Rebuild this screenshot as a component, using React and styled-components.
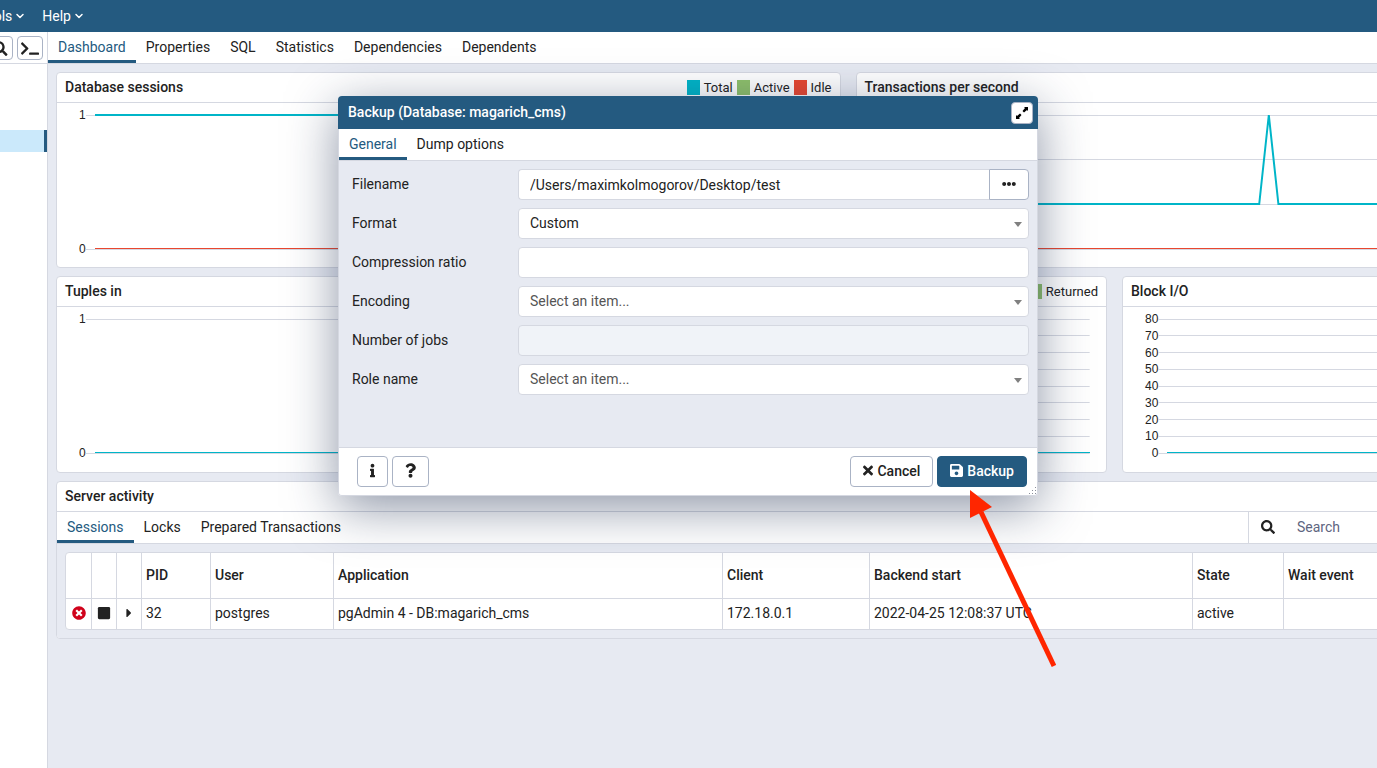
import React, { useState } from 'react';
import styled, { createGlobalStyle } from 'styled-components';
import {
    FaCaretRight,
    FaEllipsisH,
    FaInfo,
    FaQuestion,
    FaSave,
    FaSearch,
    FaSquare,
    FaTerminal,
    FaTimes,
    FaTimesCircle,
} from 'react-icons/fa';
import { LuChevronDown } from 'react-icons/lu';

const mainTabs = ['Dashboard', 'Properties', 'SQL', 'Statistics', 'Dependencies', 'Dependents'];
const activityTabs = ['Sessions', 'Locks', 'Prepared Transactions'];

const TEAL = '#00b5c8';
const GREEN = '#8fc16b';
const RED = '#e9472f';

const FLAT_TOP = '0,7 1000,7';
const FLAT_ZERO = '0,141 1000,141';
const SPIKE = '0,96 495,96 508,7 521,96 1000,96';

function TabBar({ tabs, label, children }) {
    const [active, setActive] = useState(tabs[0]);

    return (
        <TabStrip>
            <TabList role="tablist" aria-label={label}>
                {tabs.map(tab => (
                    <Tab key={tab} type="button" role="tab" aria-selected={tab === active} $active={tab === active} onClick={() => setActive(tab)}>
                        {tab}
                    </Tab>
                ))}
            </TabList>
            {children}
        </TabStrip>
    );
}

function Chart({ title, legend = [], ticks, lines, tall }) {
    const step = 134 / (ticks.length - 1);

    return (
        <Panel>
            <PanelHeader>
                <PanelTitle>{title}</PanelTitle>
                <Legend>
                    {legend.map(item => (
                        <LegendItem key={item.name}>
                            <Swatch $color={item.color}/>
                            {item.name}
                        </LegendItem>
                    ))}
                </Legend>
            </PanelHeader>
            <ChartBody $tall={tall}>
                <Axis>
                    {ticks.map(tick => <span key={tick}>{tick}</span>)}
                </Axis>
                <Plot aria-hidden="true">
                    {ticks.map((tick, i) => {
                        const y = 7 + Math.floor(i * step) + 0.5;
                        return <line key={tick} x1="0" x2="100%" y1={y} y2={y} stroke="#d5d8e1"/>;
                    })}
                    <svg x="9" y="0" width="100%" height="141" viewBox="0 0 1000 141" preserveAspectRatio="none">
                        {lines.map(line => (
                            <polyline key={line.points} points={line.points} fill="none" stroke={line.color} strokeWidth="2" vectorEffect="non-scaling-stroke"/>
                        ))}
                    </svg>
                </Plot>
            </ChartBody>
        </Panel>
    );
}

function SelectField({ id, options }) {
    return (
        <SelectWrap>
            <Select id={id} $placeholder={options[0].startsWith('Select')}>
                {options.map(option => <option key={option}>{option}</option>)}
            </Select>
            <SelectArrow viewBox="0 0 8 5" aria-hidden="true">
                <path d="M0 0h8L4 5z"/>
            </SelectArrow>
        </SelectWrap>
    );
}

function BackupDialog() {
    return (
        <Dialog role="dialog" aria-labelledby="backup-title">
            <DialogHeader>
                <DialogTitle id="backup-title">Backup (Database: magarich_cms)</DialogTitle>
                <ExpandButton type="button" aria-label="Maximize">
                    <svg viewBox="0 0 14 14" width="14" height="14" aria-hidden="true">
                        <path d="M9 1h4v4l-1-1-3 2.500L7.500 5l2.500-3z"/>
                        <path d="M5 13H1V9l1 1 3-2.500L6.500 9 4 12z"/>
                    </svg>
                </ExpandButton>
            </DialogHeader>
            <DialogContent>
                <TabBar tabs={['General', 'Dump options']} label="Backup options"/>
                <Form>
                    <Label htmlFor="filename">Filename</Label>
                    <InputGroup>
                        <Input id="filename" type="text" defaultValue="/Users/maximkolmogorov/Desktop/test"/>
                        <BrowseButton type="button" aria-label="Select file"><FaEllipsisH/></BrowseButton>
                    </InputGroup>

                    <Label htmlFor="format">Format</Label>
                    <SelectField id="format" options={['Custom']}/>

                    <Label htmlFor="ratio">Compression ratio</Label>
                    <Input id="ratio" type="text"/>

                    <Label htmlFor="encoding">Encoding</Label>
                    <SelectField id="encoding" options={['Select an item...']}/>

                    <Label htmlFor="jobs">Number of jobs</Label>
                    <Input id="jobs" type="text" disabled/>

                    <Label htmlFor="role">Role name</Label>
                    <SelectField id="role" options={['Select an item...']}/>
                </Form>
                <DialogFooter>
                    <Button type="button" aria-label="Info" $icon={5}><FaInfo/></Button>
                    <Button type="button" aria-label="Help" $icon={11}><FaQuestion/></Button>
                    <Spacer/>
                    <Button type="button" $icon={10}><FaTimes/>Cancel</Button>
                    <Button type="button" $icon={13} $primary><FaSave/>Backup</Button>
                </DialogFooter>
            </DialogContent>
            <ResizeGrip viewBox="0 0 9 9" aria-hidden="true">
                <path d="M7 1h1v1h-1zM4 4h1v1h-1zM7 4h1v1h-1zM1 7h1v1h-1zM4 7h1v1h-1zM7 7h1v1h-1z"/>
            </ResizeGrip>
        </Dialog>
    );
}

function App() {
    return (
        <Page>
            <GlobalStyle/>
            <MenuBar>
                <MenuButton type="button">Tools<LuChevronDown/></MenuButton>
                <MenuButton type="button">Help<LuChevronDown/></MenuButton>
            </MenuBar>
            <Workspace>
                <Sidebar>
                    <SidebarTools>
                        <ToolButton type="button" aria-label="Search objects"><FaSearch/></ToolButton>
                        <ToolButton type="button" aria-label="PSQL tool"><FaTerminal/></ToolButton>
                    </SidebarTools>
                    <SelectedNode/>
                </Sidebar>
                <Main>
                    <TabBar tabs={mainTabs} label="Object tabs"/>
                    <Dashboard>
                        <ChartRow $columns={2}>
                            <Chart
                                title="Database sessions"
                                legend={[{ name: 'Total', color: TEAL }, { name: 'Active', color: GREEN }, { name: 'Idle', color: RED }]}
                                ticks={[1, 0]}
                                lines={[{ color: TEAL, points: FLAT_TOP }, { color: RED, points: FLAT_ZERO }]}
                            />
                            <Chart
                                title="Transactions per second"
                                ticks={[3, 2, 1, 0]}
                                lines={[{ color: TEAL, points: SPIKE }, { color: RED, points: FLAT_ZERO }]}
                            />
                        </ChartRow>
                        <ChartRow $columns={3}>
                            <Chart tall title="Tuples in" ticks={[1, 0]} lines={[{ color: TEAL, points: FLAT_ZERO }]}/>
                            <Chart
                                tall
                                title="Tuples out"
                                legend={[{ name: 'Returned', color: GREEN }]}
                                ticks={[80, 70, 60, 50, 40, 30, 20, 10, 0]}
                                lines={[{ color: TEAL, points: FLAT_ZERO }]}
                            />
                            <Chart
                                tall
                                title="Block I/O"
                                ticks={[80, 70, 60, 50, 40, 30, 20, 10, 0]}
                                lines={[{ color: TEAL, points: FLAT_ZERO }]}
                            />
                        </ChartRow>
                        <Panel>
                            <PanelHeader>
                                <PanelTitle>Server activity</PanelTitle>
                            </PanelHeader>
                            <TabBar tabs={activityTabs} label="Server activity">
                                <SearchBox>
                                    <FaSearch/>
                                    <SearchInput type="search" placeholder="Search" aria-label="Search"/>
                                </SearchBox>
                            </TabBar>
                            <TableArea>
                                <Table>
                                    <colgroup>
                                        <Col $width={26}/>
                                        <Col $width={25}/>
                                        <Col $width={25}/>
                                        <Col $width={69}/>
                                        <Col $width={123}/>
                                        <Col $width={389}/>
                                        <Col $width={147}/>
                                        <Col $width={323}/>
                                        <Col $width={91}/>
                                        <col/>
                                    </colgroup>
                                    <thead>
                                        <tr>
                                            <th/>
                                            <th/>
                                            <th/>
                                            <th>PID</th>
                                            <th>User</th>
                                            <th>Application</th>
                                            <th>Client</th>
                                            <th>Backend start</th>
                                            <th>State</th>
                                            <th>Wait event</th>
                                        </tr>
                                    </thead>
                                    <tbody>
                                        <tr>
                                            <IconCell $color="#d0021b"><FaTimesCircle/></IconCell>
                                            <IconCell><FaSquare/></IconCell>
                                            <IconCell><FaCaretRight/></IconCell>
                                            <td>32</td>
                                            <td>postgres</td>
                                            <td>pgAdmin 4 - DB:magarich_cms</td>
                                            <td>172.18.0.1</td>
                                            <td>2022-04-25 12:08:37 UTC</td>
                                            <td>active</td>
                                            <td/>
                                        </tr>
                                    </tbody>
                                </Table>
                            </TableArea>
                        </Panel>
                    </Dashboard>
                </Main>
            </Workspace>
            <BackupDialog/>
            <Arrow viewBox="0 0 90 180" aria-hidden="true">
                <path d="M15 22L88 176" stroke="#ff2600" strokeWidth="5"/>
                <path d="M4 0l22 17-22 11z" fill="#ff2600"/>
            </Arrow>
        </Page>
    );
}

export default App;

const GlobalStyle = createGlobalStyle`
    * {
        box-sizing: border-box;
    }

    body {
        margin: 0;
        overflow: hidden;
        background: #e7eaf2;
    }

    body, button, input, select {
        font-family: Roboto, sans-serif;
        font-size: 14px;
        color: #222;
    }

    button {
        cursor: pointer;
    }
`;

const Page = styled.div`
    position: relative;
    display: flex;
    flex-direction: column;
    min-height: 100vh;
    overflow: hidden;
`;

const MenuBar = styled.nav`
    display: flex;
    gap: 16px;
    height: 32px;
    margin-left: -22px;
    background: #245a80;
`;

const MenuButton = styled.button`
    display: flex;
    align-items: center;
    gap: 2px;
    padding: 0;
    border: none;
    background: none;
    color: #fff;

    > svg {
        width: 12px;
        height: 12px;
        stroke-width: 3px;
    }
`;

const Workspace = styled.div`
    display: flex;
    flex: 1;
`;

const Sidebar = styled.aside`
    flex: none;
    width: 48px;
    overflow: hidden;
    border-right: 1px solid #d5d8e1;
    background: #fff;
`;

const SidebarTools = styled.div`
    display: flex;
    justify-content: flex-end;
    gap: 4px;
    height: 32px;
    padding: 4px;
    border-bottom: 1px solid #d5d8e1;
`;

const ToolButton = styled.button`
    display: flex;
    flex: none;
    align-items: center;
    justify-content: center;
    width: 26px;
    height: 24px;
    padding: 0;
    border: 1px solid #aab3c5;
    border-radius: 4px;
    background: #fff;

    > svg {
        width: 18px;
        height: 15px;
    }
`;

const SelectedNode = styled.div`
    height: 22px;
    margin-top: 66px;
    border-right: 3px solid #245a80;
    background: #cbe9fb;
`;

/* the dashboard keeps a wide layout and runs past the window edge */
const Main = styled.main`
    flex: 1 0 0;
    min-width: 1600px;
`;

const TabStrip = styled.div`
    display: flex;
    justify-content: space-between;
    height: 32px;
    border-bottom: 1px solid #d5d8e1;
    background: #fff;
`;

const TabList = styled.div`
    display: flex;
`;

const Tab = styled.button`
    padding: 1px 10px 0;
    border: none;
    border-bottom: 3px solid ${({ $active }) => ($active ? '#245a80' : 'transparent')};
    background: none;
    color: ${({ $active }) => ($active ? '#245a80' : '#222')};
`;

const Dashboard = styled.div`
    display: flex;
    flex-direction: column;
    gap: 8px;
    padding: 8px;
`;

const ChartRow = styled.div`
    display: grid;
    grid-template-columns: repeat(${({ $columns }) => $columns}, 1fr);
    gap: 15px;
`;

const Panel = styled.section`
    overflow: hidden;
    border: 1px solid #d5d8e1;
    border-radius: 4px;
    background: #fff;
`;

const PanelHeader = styled.header`
    display: flex;
    align-items: center;
    justify-content: space-between;
    height: 30px;
    padding: 0 8px;
    border-bottom: 1px solid #d5d8e1;
`;

const PanelTitle = styled.h2`
    margin: 0;
    padding-bottom: 2px;
    font-size: 14px;
    font-weight: 500;
`;

const Legend = styled.div`
    display: flex;
    gap: 4px;
    font-size: 13px;
`;

const LegendItem = styled.span`
    display: flex;
    align-items: center;
    gap: 4px;
`;

const Swatch = styled.span`
    width: 13px;
    height: 15px;
    background: ${({ $color }) => $color};
`;

const ChartBody = styled.div`
    display: flex;
    height: ${({ $tall }) => ($tall ? 165 : 164)}px;
    padding: 5px 16px 0 22px;
`;

const Axis = styled.div`
    display: flex;
    flex-direction: column;
    justify-content: space-between;
    height: 148px;
    font-family: "Liberation Sans", Arial, sans-serif;
    font-size: 12px;
    line-height: 14px;
    text-align: right;
`;

const Plot = styled.svg`
    flex: 1;
    width: 0;
    height: 148px;
`;

const SearchBox = styled.div`
    display: flex;
    align-items: center;
    width: 391px;
    padding: 0 12px 2px;
    gap: 22px;
    border-left: 1px solid #d5d8e1;
`;

const SearchInput = styled.input`
    flex: 1;
    padding: 0;
    border: none;
    outline: none;
    background: none;

    &::placeholder {
        color: #5e6580;
    }
`;

const TableArea = styled.div`
    padding: 8px;
    background: #e7eaf2;
`;

const Table = styled.table`
    width: 100%;
    table-layout: fixed;
    border: 1px solid #d5d8e1;
    border-radius: 4px;
    border-spacing: 0;
    background: #fff;

    th, td {
        padding: 0 4px 2px;
        text-align: left;
        border-right: 1px solid #d5d8e1;
    }

    td {
        height: 30px;
    }

    th {
        height: 46px;
        border-bottom: 1px solid #d5d8e1;
        font-weight: 500;
    }

    th:last-child, td:last-child {
        border-right: none;
    }
`;

const Col = styled.col`
    width: ${({ $width }) => $width}px;
`;

const IconCell = styled.td`
    color: ${({ $color }) => $color || '#222'};

    > svg {
        display: block;
        margin: 0 auto;
    }
`;

const Dialog = styled.div`
    position: absolute;
    top: 96px;
    left: 338px;
    width: 700px;
    border-radius: 4px;
    box-shadow: 0 12px 50px rgba(30, 45, 80, 0.5);
`;

const DialogHeader = styled.header`
    display: flex;
    align-items: center;
    justify-content: space-between;
    height: 33px;
    padding: 1px 5px 0 10px;
    border-radius: 4px 4px 0 0;
    background: #245a80;
    color: #fff;
`;

const DialogTitle = styled.h1`
    margin: 0;
    padding-bottom: 3px;
    font-size: 14px;
    font-weight: 500;
`;

const ExpandButton = styled.button`
    display: flex;
    align-items: center;
    justify-content: center;
    width: 22px;
    height: 22px;
    padding: 0;
    border: 1px solid #aab3c5;
    border-radius: 4px;
    background: #fff;
    color: #111;
`;

const DialogContent = styled.div`
    overflow: hidden;
    border: 1px solid #d5d8e1;
    border-top: none;
    border-radius: 0 0 4px 4px;
    background: #e7eaf2;
`;

const Form = styled.form`
    display: grid;
    grid-template-columns: 166px 1fr;
    grid-auto-rows: 31px;
    align-items: center;
    row-gap: 8px;
    height: 286px;
    padding: 8px 8px 0 13px;
`;

const Label = styled.label`
    padding-bottom: 2px;
`;

const InputGroup = styled.div`
    display: flex;
`;

const Input = styled.input`
    width: 100%;
    height: 31px;
    padding: 0 11px;
    border: 1px solid #d5d8e1;
    border-radius: 4px;
    background: #fff;

    ${InputGroup} > & {
        border-right: none;
        border-radius: 4px 0 0 4px;
    }

    &:disabled {
        background: #f0f3f8;
    }
`;

const BrowseButton = styled.button`
    display: flex;
    flex: none;
    align-items: center;
    justify-content: center;
    width: 40px;
    padding-bottom: 2px;
    border: 1px solid #aab3c5;
    border-radius: 0 4px 4px 0;
    background: #fff;
`;

const SelectWrap = styled.div`
    position: relative;
`;

const Select = styled.select`
    display: block;
    width: 100%;
    height: 31px;
    padding: 0 11px 2px;
    appearance: none;
    border: 1px solid #d5d8e1;
    border-radius: 4px;
    background: #fff;
    color: ${({ $placeholder }) => ($placeholder ? '#555' : '#222')};
`;

const SelectArrow = styled.svg`
    position: absolute;
    top: 14px;
    right: 7px;
    width: 8px;
    height: 5px;
    fill: #808080;
    pointer-events: none;
`;

const DialogFooter = styled.footer`
    display: flex;
    align-items: center;
    gap: 4px;
    height: 48px;
    padding: 0 10px 0 18px;
    border-top: 1px solid #d5d8e1;
    background: #fff;
`;

const Spacer = styled.div`
    flex: 1;
`;

const Button = styled.button`
    display: flex;
    align-items: center;
    gap: 4px;
    height: 31px;
    padding: 0 12px 2px;
    border: 1px solid ${({ $primary }) => ($primary ? '#245a80' : '#aab3c5')};
    border-radius: 4px;
    background: ${({ $primary }) => ($primary ? '#245a80' : '#fff')};
    color: ${({ $primary }) => ($primary ? '#fff' : '#222')};
    font-weight: 500;

    > svg {
        width: ${({ $icon }) => $icon}px;
        height: 15px;
    }
`;

const ResizeGrip = styled.svg`
    position: absolute;
    right: 1px;
    bottom: 1px;
    width: 9px;
    height: 9px;
    fill: #8a8f9a;
`;

const Arrow = styled.svg`
    position: absolute;
    top: 490px;
    left: 966px;
    width: 90px;
    height: 180px;
    pointer-events: none;
`;
